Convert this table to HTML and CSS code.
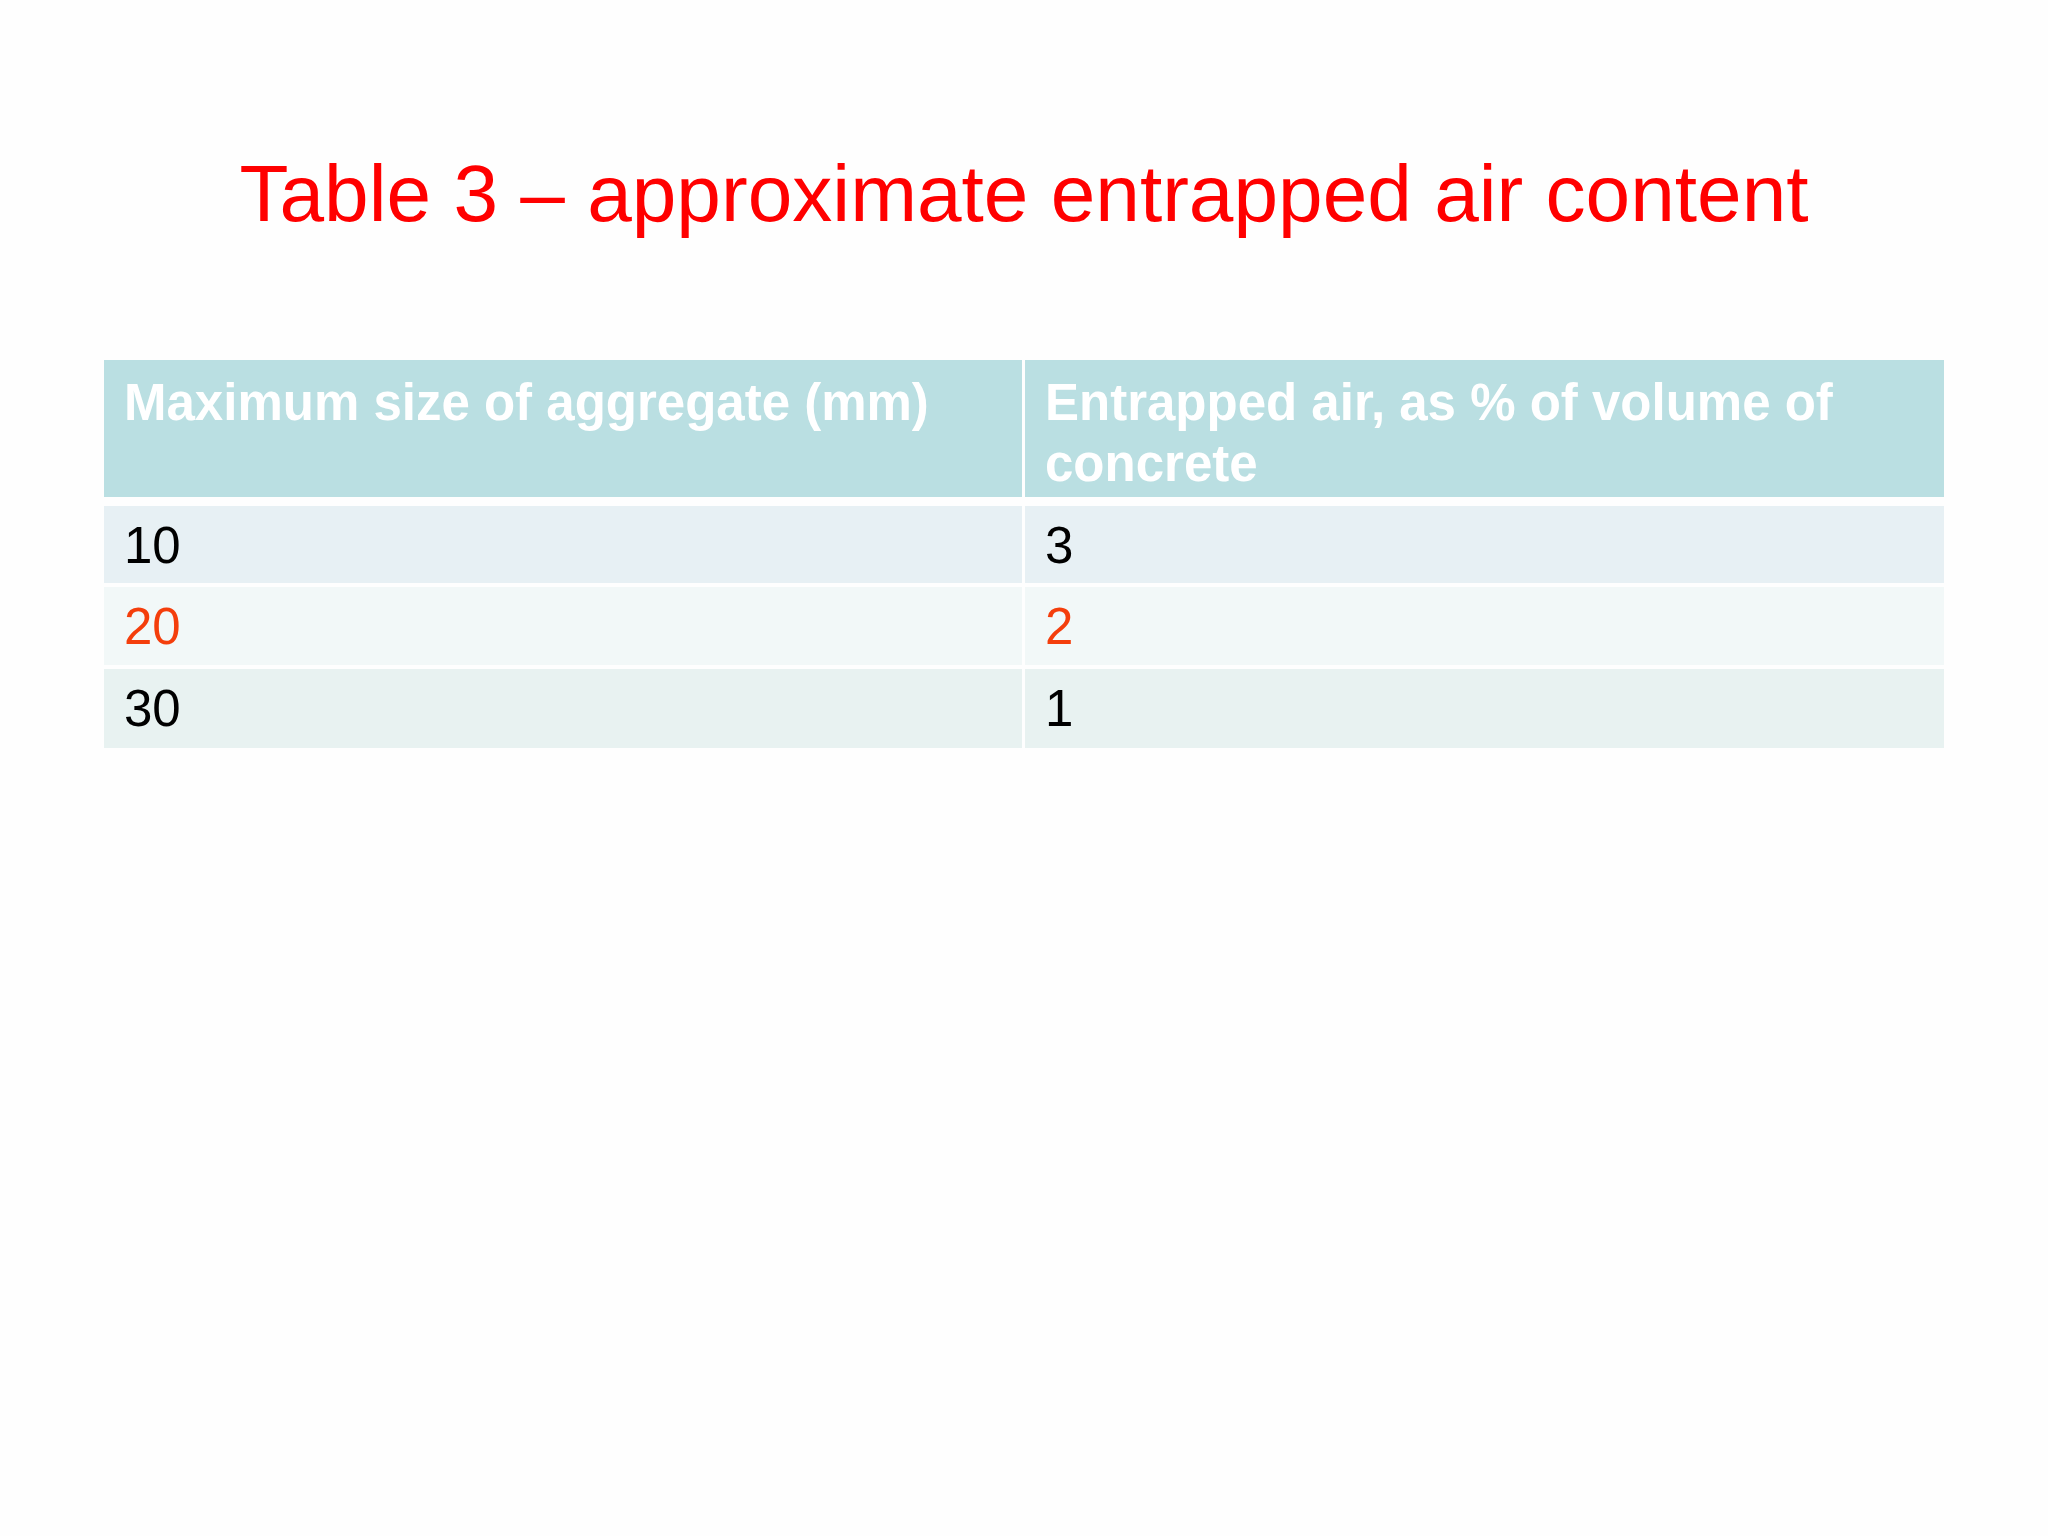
FILE: index.html
```html
<!DOCTYPE html>
<html lang="en">
<head>
<meta charset="utf-8">
<title>Table 3 – approximate entrapped air content</title>
<link rel="stylesheet" href="styles.css">
</head>
<body>
<main class="slide">
  <h1 class="title">Table 3 – approximate entrapped air content</h1>
  <div class="table">
    <div class="cell head">Maximum size of aggregate (mm)</div>
    <div class="cell head">Entrapped air, as % of volume of concrete</div>
    <div class="cell row1 first-row">10</div>
    <div class="cell row1 first-row">3</div>
    <div class="cell row2 accent">20</div>
    <div class="cell row2 accent">2</div>
    <div class="cell row3">30</div>
    <div class="cell row3">1</div>
  </div>
</main>
</body>
</html>
```
FILE: styles.css
```css
html, body {
  margin: 0;
  padding: 0;
  background: #fefefe;
}
.slide {
  width: 2048px;
  height: 1536px;
  box-sizing: border-box;
  padding: 147px 104px 0 104px;
  font-family: "Liberation Sans", Arial, sans-serif;
  background: #fefefe;
}
.title {
  margin: 0;
  font-weight: normal;
  font-size: 80.2px;
  line-height: normal;
  color: #ff0000;
  text-align: center;
  height: 213px;
}
.table {
  display: grid;
  grid-template-columns: 918px 919px;
  column-gap: 3px;
  width: 1840px;
}
.cell {
  font-size: 51px;
  line-height: normal;
  padding: 10px 20px 10px 20px;
  color: #000;
}
.head {
  background: #badfe2;
  color: #ffffff;
  font-weight: bold;
  line-height: 61px;
  padding-top: 12px;
  padding-bottom: 3px;
  height: 122px;
}
.first-row {
  margin-top: 9px;
}
.row1 {
  background: #e7f0f4;
  height: 57px;
}
.row2 {
  background: #f2f8f8;
  margin-top: 4px;
  height: 58px;
}
.row3 {
  background: #e8f2f1;
  margin-top: 4px;
  height: 59px;
}
.accent {
  color: #f43e0c;
}
```
